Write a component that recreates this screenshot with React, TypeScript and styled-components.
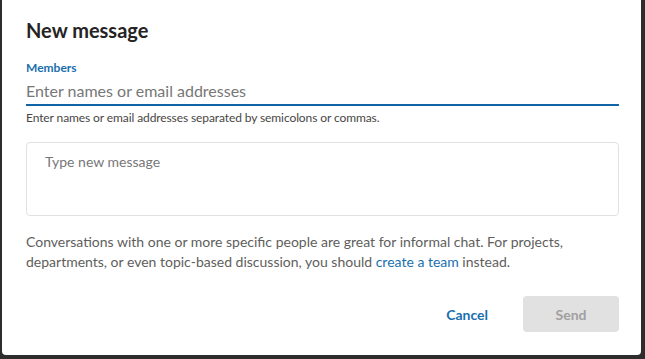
import React from 'react'
import styled, { createGlobalStyle } from 'styled-components'

const GlobalStyle = createGlobalStyle`
  html, body {
    margin: 0;
    padding: 0;
    background: #2d2d2d;
    font-family: Lato, "Open Sans", sans-serif;
  }
`

const App: React.FC = () => {
  return (
    <>
      <GlobalStyle />
      <Dialog>
        <Title>New message</Title>
        <Field>
          <FieldLabel>Members</FieldLabel>
          <MembersInput placeholder='Enter names or email addresses' />
          <Hint>Enter names or email addresses separated by semicolons or commas.</Hint>
        </Field>
        <MessageBox placeholder='Type new message' />
        <Note>
          Conversations with one or more specific people are great for informal chat. For projects,
          departments, or even topic-based discussion, you should <Link>create a team</Link> instead.
        </Note>
        <Actions>
          <TextButton>Cancel</TextButton>
          <PrimaryButton disabled>Send</PrimaryButton>
        </Actions>
      </Dialog>
    </>
  )
}

const Dialog = styled.div`
  box-sizing: border-box;
  width: 639px;
  height: 355px;
  margin-left: 2px;
  background: #fff;
  border-radius: 0 0 4px 4px;
  padding: 17px 22px 0 24px;
  display: flex;
  flex-direction: column;
`

const Title = styled.h1`
  margin: 0;
  font-size: 20px;
  font-weight: 700;
  color: #252423;
  line-height: 26px;
`

const Field = styled.div`
  margin-top: 17px;
  display: flex;
  flex-direction: column;
`

const FieldLabel = styled.label`
  font-size: 12px;
  font-weight: 700;
  color: #1a6fae;
  line-height: 16px;
`

const MembersInput = styled.input`
  box-sizing: border-box;
  border: none;
  border-bottom: 2px solid #1165a6;
  outline: none;
  padding: 0 0 3px;
  height: 27px;
  margin-top: 3px;
  font-family: inherit;
  font-size: 16px;
  color: #252423;
  &::placeholder {
    color: #777;
  }
`

const Hint = styled.div`
  margin-top: 5px;
  font-size: 12px;
  letter-spacing: -0.1px;
  color: #484644;
  line-height: 14px;
`

const MessageBox = styled.textarea`
  box-sizing: border-box;
  margin-top: 17px;
  height: 74px;
  resize: none;
  border: 1px solid #e1e1e1;
  border-radius: 4px;
  padding: 10px 18px;
  outline: none;
  font-family: inherit;
  font-size: 14px;
  line-height: 18px;
  &::placeholder {
    color: #777;
  }
`

const Note = styled.p`
  margin: 16px 0 0;
  font-size: 14px;
  line-height: 20px;
  color: #605e5c;
`

const Link = styled.a`
  color: #1a6fae;
  text-decoration: none;
  cursor: pointer;
`

const Actions = styled.div`
  margin-top: 24px;
  display: flex;
  justify-content: flex-end;
  align-items: center;
  gap: 35px;
`

const TextButton = styled.button`
  border: none;
  background: none;
  padding: 0;
  font-family: inherit;
  font-size: 14px;
  font-weight: 700;
  color: #1a6fae;
  cursor: pointer;
`

const PrimaryButton = styled.button`
  width: 96px;
  height: 36px;
  border: none;
  border-radius: 4px;
  background: #e1e1e1;
  color: #a0a0a0;
  font-family: inherit;
  font-size: 14px;
  font-weight: 700;
`

export default App
